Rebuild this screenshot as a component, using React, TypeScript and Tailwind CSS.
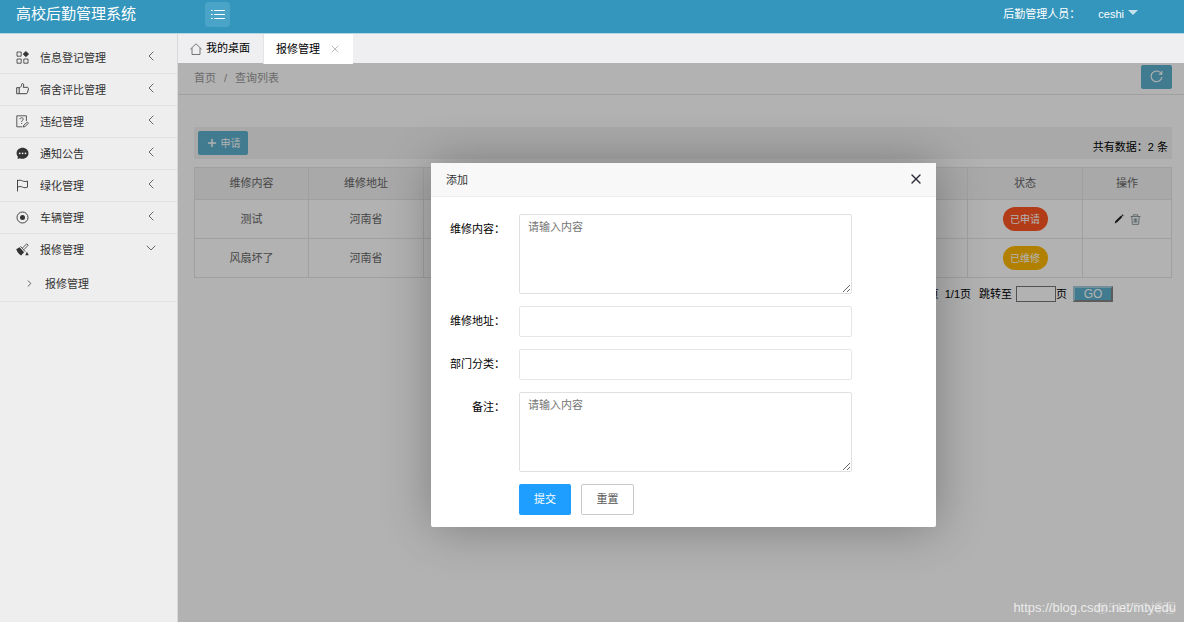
import { useState } from 'react'
import type { ReactNode } from 'react'
import { ChevronDown, ChevronLeft, ChevronRight, Plus, X } from 'lucide-react'

interface MenuItem {
  label: string
  icon: ReactNode
  children?: string[]
}

interface Repair {
  content: string
  address: string
  status: string
  badge: string
  editable: boolean
}

const ICON = 'h-[13px] w-[13px] shrink-0 text-[#333]'

const MENU: MenuItem[] = [
  {
    label: '信息登记管理',
    icon: (
      <svg viewBox="0 0 13 13" className={ICON} fill="none" stroke="currentColor" strokeWidth="0.8">
        <path d="M1 1h4.2v4.2H1zM1 8h4.2v4.2H1zM7.8 8H12v4.2H7.8z" />
        <path d="M9.9.4l2.7 2.7-2.7 2.7-2.7-2.7z" fill="currentColor" />
      </svg>
    ),
  },
  {
    label: '宿舍评比管理',
    icon: (
      <svg viewBox="0 0 13 13" className={ICON} fill="none" stroke="currentColor" strokeWidth="0.9" strokeLinejoin="round">
        <path d="M.7 4.700h2.500v6H.7zM3.200 4.900C4.800 4.400 5.600 3 5.600 1.400c0-1.200 2.100-1.200 2.100.5 0 .9-.2 1.700-.5 2.400h3.900c1 0 1.500.7 1.300 1.500l-.9 3.800c-.2.7-.6 1.100-1.300 1.100H3.200" />
      </svg>
    ),
  },
  {
    label: '违纪管理',
    icon: (
      <svg viewBox="0 0 13 13" className={ICON} fill="none" stroke="currentColor" strokeWidth="0.8">
        <path d="M10.400 6V.8H.8v11h5.500" />
        <path d="M4 4.200c0-2 3.200-2 3.200 0C7.200 5.500 5.600 5.400 5.600 7M5.600 8v1" />
        <path d="M7.300 12l.4-1.700 3.600-3.200 1.200 1.200-3.600 3.300z" />
      </svg>
    ),
  },
  {
    label: '通知公告',
    icon: (
      <svg viewBox="0 0 13 13" className={ICON} fill="currentColor">
        <path d="M6.600.8C3.200.8.6 3.100.6 6.200c0 1.300.5 2.500 1.300 3.400L1.600 12l2.300-.8c.8.4 1.700.6 2.700.6 3.300 0 5.900-2.400 5.900-5.500S9.900.8 6.600.8z" />
        <g fill="#eee">
          <circle cx="3.700" cy="6.300" r=".9" />
          <circle cx="6.600" cy="6.300" r=".9" />
          <circle cx="9.500" cy="6.300" r=".9" />
        </g>
      </svg>
    ),
  },
  {
    label: '绿化管理',
    icon: (
      <svg viewBox="0 0 13 13" className={ICON} fill="none" stroke="currentColor" strokeWidth="0.9">
        <path d="M1.500.8v11.600M1.500 1.800c2-.9 3.400-.7 5 .1s3.200.8 5 .1v6.200c-1.800.7-3.400.7-5-.1s-3-.8-5 .1" />
      </svg>
    ),
  },
  {
    label: '车辆管理',
    icon: (
      <svg viewBox="0 0 13 13" className={ICON} fill="none" stroke="currentColor" strokeWidth="0.9">
        <circle cx="6.500" cy="6.500" r="5.500" />
        <circle cx="6.500" cy="6.500" r="2.500" fill="currentColor" stroke="none" />
      </svg>
    ),
  },
  {
    label: '报修管理',
    icon: (
      <svg viewBox="0 0 13 13" className={ICON} fill="currentColor">
        <path d="M.2 6.300l3.400-2.100 4.500 5-3 3.200C3.300 11.600 1.400 9.600.2 6.300z" />
        <path d="M4.400 3.300l4.900 5.300M6.500 5l4.200-4.200 1.500 1.400L8 6.600" fill="none" stroke="currentColor" strokeWidth="0.8" />
        <path d="M10.900 8.800l1.900 3.500H9.300z" />
      </svg>
    ),
    children: ['报修管理'],
  },
]

const REPAIRS: Repair[] = [
  { content: '测试', address: '河南省', status: '已申请', badge: 'bg-[#ff5722]', editable: true },
  { content: '风扇坏了', address: '河南省', status: '已维修', badge: 'bg-[#ffb800]', editable: false },
]

function Header() {
  return (
    <header className="flex h-[34px] items-center border-b border-[#b9d5e2] bg-[#3496bc] pb-1 text-white">
      <h1 className="w-[205px] shrink-0 pl-4 text-[15px]">高校后勤管理系统</h1>
      <button type="button" aria-label="菜单" className="flex h-[25px] w-[25px] items-center justify-center rounded-sm bg-[#4aa4c7]">
        <svg viewBox="0 0 14 11" className="h-[11px] w-[14px]" stroke="currentColor" strokeWidth="1">
          <path d="M0 1.500h1.600M3.200 1.500H14M0 5.500h1.600M3.200 5.500H14M0 9.500h1.600M3.200 9.500H14" />
        </svg>
      </button>
      <div className="ml-auto flex items-center pr-[46px] text-[11px]">
        <span>后勤管理人员：</span>
        <button type="button" className="ml-[18px] flex items-center gap-1">
          ceshi
          <svg viewBox="0 0 10 5" className="mb-1 h-[5px] w-[10px]" fill="#c5e1ec">
            <path d="M0 0h10L5 5z" />
          </svg>
        </button>
      </div>
    </header>
  )
}

function Sidebar() {
  return (
    <aside className="w-[178px] shrink-0 border-r border-[#d8d8d8] bg-[#eee] pt-2">
      <nav>
        <ul>
          {MENU.map((item) => (
            <li key={item.label} className="border-b border-[#e2e2e2]">
              <a href="#" className="flex h-[31px] items-center pr-[18px] pl-4 text-[11px] text-[#333]">
                {item.icon}
                <span className="ml-[11px] flex-1 pt-[2px]">{item.label}</span>
                {item.children ? (
                  <ChevronDown className="mb-1 h-4 w-4 text-[#666]" strokeWidth={1.5} />
                ) : (
                  <ChevronLeft className="mb-1 h-4 w-4 text-[#666]" strokeWidth={1.5} />
                )}
              </a>
              {item.children?.map((child) => (
                <a key={child} href="#" className="flex h-9 items-center gap-[10px] pl-6 text-[11px] text-[#333]">
                  <ChevronRight className="h-[11px] w-[11px] text-[#555]" strokeWidth={2} />
                  <span className="pt-[2px]">{child}</span>
                </a>
              ))}
            </li>
          ))}
        </ul>
      </nav>
    </aside>
  )
}

function Tabs() {
  return (
    <div className="relative z-10 flex h-[29px] bg-[#efeef0] text-[11px] text-black">
      <button type="button" className="flex items-center gap-1 pr-[13px] pl-3">
        <svg viewBox="0 0 12 12" className="h-3 w-3" fill="none" stroke="#555" strokeWidth="0.8">
          <path d="M.4 6.200L6 .8l5.600 5.400M2 5v6.500h8V5" />
        </svg>
        我的桌面
      </button>
      <div className="flex h-[30px] items-center gap-[9px] border-l border-[#e4e4e4] bg-white pr-3 pl-3">
        <button type="button">报修管理</button>
        <button type="button" aria-label="关闭标签">
          <X className="h-3 w-3 text-[#bbb]" strokeWidth={2} />
        </button>
      </div>
    </div>
  )
}

function RepairTable() {
  return (
    <table className="mt-2 w-full table-fixed border-collapse border border-[#e6e6e6] text-center text-[11px] text-[#666]">
      <colgroup>
        <col className="w-[114px]" />
        <col className="w-[115px]" />
        <col />
        <col className="w-[115px]" />
        <col className="w-[89px]" />
      </colgroup>
      <thead>
        <tr className="h-8 bg-[#f2f2f2]">
          <th className="border border-[#e6e6e6] font-normal">维修内容</th>
          <th className="border border-[#e6e6e6] font-normal">维修地址</th>
          <td className="border border-[#e6e6e6]" />
          <th className="border border-[#e6e6e6] font-normal">状态</th>
          <th className="border border-[#e6e6e6] font-normal">操作</th>
        </tr>
      </thead>
      <tbody>
        {REPAIRS.map((row) => (
          <tr key={row.content} className="h-[39px]">
            <td className="border border-[#e6e6e6]">{row.content}</td>
            <td className="border border-[#e6e6e6]">{row.address}</td>
            <td className="border border-[#e6e6e6]" />
            <td className="border border-[#e6e6e6]">
              <span className={`inline-flex h-6 w-[45px] items-center justify-center rounded-full text-[10px] text-white ${row.badge}`}>
                {row.status}
              </span>
            </td>
            <td className="border border-[#e6e6e6]">
              {row.editable && (
                <div className="flex items-center justify-center gap-[6px]">
                  <button type="button" aria-label="编辑">
                    <svg viewBox="0 0 10 10" className="h-[10px] w-[10px]" fill="#222">
                      <path d="M.6 9.400l.8-2.300L7 1.500l1.400 1.400-5.500 5.700zM7.500 1l.7-.7 1.500 1.400-.7.7z" />
                    </svg>
                  </button>
                  <button type="button" aria-label="删除">
                    <svg viewBox="0 0 11 11" className="h-[11px] w-[11px]" fill="none" stroke="#7f9294" strokeWidth="0.9">
                      <path d="M.5 2.500h10M3.300 2.300V.8h4.400v1.500M1.800 2.500l.6 7.900h6.200l.6-7.900M4.200 4.300v4.400M5.500 4.300v4.400M6.800 4.300v4.400" />
                    </svg>
                  </button>
                </div>
              )}
            </td>
          </tr>
        ))}
      </tbody>
    </table>
  )
}

function Pager() {
  return (
    <div className="mt-2 flex items-center justify-end pr-[59px] text-[11px] text-black">
      <a href="#" className="mr-[6px]">尾页</a>
      <span className="mr-2">1/1页</span>
      <label htmlFor="page" className="mr-1">跳转至</label>
      <input id="page" className="h-4 w-10 border border-[#767676] bg-white" />
      <span>页</span>
      <button type="button" className="ml-[6px] flex h-4 w-10 items-center justify-center border-2 border-t-[#a5cedd] border-r-[#858585] border-b-[#858585] border-l-[#a5cedd] bg-[#5eb0cd] text-[12px] text-white">
        GO
      </button>
    </div>
  )
}

const LABEL = 'w-[88px] shrink-0 pt-[7px] pr-[14px] text-right'
const INPUT = 'h-[31px] min-w-0 flex-1 rounded-xs border border-[#e6e6e6] bg-white px-2 outline-none'
const TEXTAREA = 'h-20 min-w-0 flex-1 resize rounded-xs border border-[#e0e0e0] bg-white px-2 py-1 outline-none placeholder:text-[#757575]'

function AddDialog({ onClose }: { onClose: () => void }) {
  return (
    <div className="absolute inset-0 flex items-center justify-center bg-black/30 pt-1 pl-[5px]">
      <div role="dialog" aria-labelledby="dialog-title" className="w-[505px] rounded-xs bg-white shadow-[1px_1px_50px_rgba(0,0,0,0.3)]">
        <div className="flex h-[34px] items-center justify-between border-b border-[#eee] bg-[#f8f8f8] pr-3 pl-[15px]">
          <h2 id="dialog-title" className="pt-[2px] text-[11px] text-[#333]">添加</h2>
          <button type="button" aria-label="关闭" onClick={onClose}>
            <X className="h-4 w-4 text-[#2e2d3c]" strokeWidth={2} />
          </button>
        </div>
        <form className="flex flex-col gap-3 pt-[17px] pr-[84px] pb-3 text-[11px] text-black" onSubmit={(e) => e.preventDefault()}>
          <div className="flex">
            <label htmlFor="content" className={LABEL}>维修内容：</label>
            <textarea id="content" placeholder="请输入内容" className={TEXTAREA} />
          </div>
          <div className="flex">
            <label htmlFor="address" className={LABEL}>维修地址：</label>
            <input id="address" className={INPUT} />
          </div>
          <div className="flex">
            <label htmlFor="department" className={LABEL}>部门分类：</label>
            <input id="department" className={INPUT} />
          </div>
          <div className="flex">
            <label htmlFor="remark" className={LABEL}>备注：</label>
            <textarea id="remark" placeholder="请输入内容" className={TEXTAREA} />
          </div>
          <div className="flex gap-[10px] pl-[88px]">
            <button type="submit" className="h-[31px] w-[52px] rounded-xs bg-[#1e9fff] text-white">提交</button>
            <button type="reset" className="h-[31px] w-[53px] rounded-xs border border-[#c9c9c9] bg-white text-[#555]">重置</button>
          </div>
        </form>
      </div>
    </div>
  )
}

export default function App() {
  const [open, setOpen] = useState(true)

  return (
    <div className="flex min-h-screen flex-col bg-white font-['Liberation_Sans','Noto_Sans_CJK_SC',sans-serif]">
      <Header />
      <div className="flex flex-1">
        <Sidebar />
        <div className="flex min-w-0 flex-1 flex-col">
          <Tabs />
          <main className="relative flex-1">
            <div className="flex h-8 items-center justify-between border-b border-[#e5e5e5] pr-3 pl-4 text-[11px] text-[#999]">
              <nav className="flex gap-2">
                <a href="#">首页</a>
                <span>/</span>
                <a href="#">查询列表</a>
              </nav>
              <button type="button" aria-label="刷新" className="mb-1 flex h-6 w-[31px] items-center justify-center rounded-xs bg-[#5eb0cd] text-white">
                <svg viewBox="0 0 13 13" className="h-[13px] w-[13px]" fill="none" stroke="currentColor" strokeWidth="1.1">
                  <path d="M11.300 3.800A5.400 5.400 0 1 0 11.900 7M11.800 1v3.200H8.600" />
                </svg>
              </button>
            </div>
            <div className="pt-8 pr-3 pl-4">
              <div className="flex h-8 items-center justify-between bg-[#f2f2f2] pr-1 pl-1 text-[11px]">
                <button type="button" className="flex h-6 w-[50px] items-center justify-center gap-[3px] rounded-xs bg-[#5eb0cd] text-[10px] text-white">
                  <Plus className="h-3 w-3" strokeWidth={3} />
                  申请
                </button>
                <span className="pt-2 text-black">共有数据：2 条</span>
              </div>
              <RepairTable />
              <Pager />
            </div>
            {open && <AddDialog onClose={() => setOpen(false)} />}
            <div className="pointer-events-none absolute right-2 bottom-[5px] text-[13px] text-white/75">https://blog.csdn.net/mtyedu</div>
            <div className="pointer-events-none absolute right-2 bottom-[5px] text-[13px] text-white/30">@51CTO博客</div>
          </main>
        </div>
      </div>
    </div>
  )
}
